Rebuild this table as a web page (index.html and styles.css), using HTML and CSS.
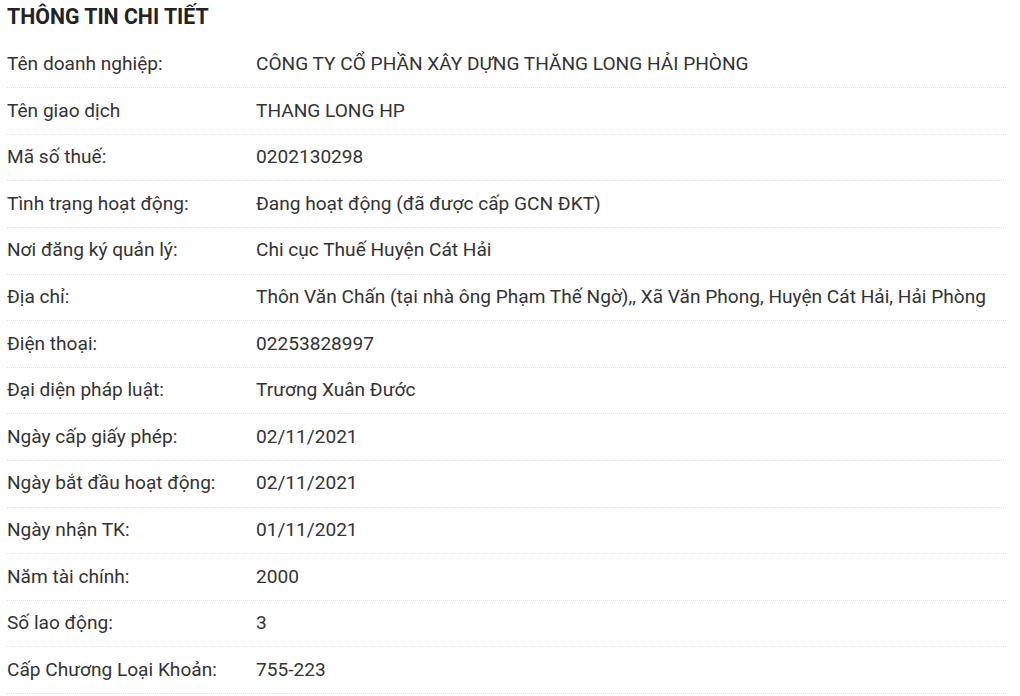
FILE: index.html
```html
<!DOCTYPE html>
<html lang="vi">
<head>
<meta charset="utf-8">
<link rel="stylesheet" href="styles.css">
</head>
<body>
<div class="detail">
  <h2 class="title">THÔNG TIN CHI TIẾT</h2>
  <div class="rows">
    <div class="row"><div class="label">Tên doanh nghiệp:</div><div class="value">CÔNG TY CỔ PHẦN XÂY DỰNG THĂNG LONG HẢI PHÒNG</div></div>
    <div class="row"><div class="label">Tên giao dịch</div><div class="value">THANG LONG HP</div></div>
    <div class="row"><div class="label">Mã số thuế:</div><div class="value">0202130298</div></div>
    <div class="row"><div class="label">Tình trạng hoạt động:</div><div class="value">Đang hoạt động (đã được cấp GCN ĐKT)</div></div>
    <div class="row"><div class="label">Nơi đăng ký quản lý:</div><div class="value">Chi cục Thuế Huyện Cát Hải</div></div>
    <div class="row"><div class="label">Địa chỉ:</div><div class="value">Thôn Văn Chấn (tại nhà ông Phạm Thế Ngờ),, Xã Văn Phong, Huyện Cát Hải, Hải Phòng</div></div>
    <div class="row"><div class="label">Điện thoại:</div><div class="value">02253828997</div></div>
    <div class="row"><div class="label">Đại diện pháp luật:</div><div class="value">Trương Xuân Đước</div></div>
    <div class="row"><div class="label">Ngày cấp giấy phép:</div><div class="value">02/11/2021</div></div>
    <div class="row"><div class="label">Ngày bắt đầu hoạt động:</div><div class="value">02/11/2021</div></div>
    <div class="row"><div class="label">Ngày nhận TK:</div><div class="value">01/11/2021</div></div>
    <div class="row"><div class="label">Năm tài chính:</div><div class="value">2000</div></div>
    <div class="row"><div class="label">Số lao động:</div><div class="value">3</div></div>
    <div class="row"><div class="label">Cấp Chương Loại Khoản:</div><div class="value">755-223</div></div>
  </div>
</div>
</body>
</html>
```
FILE: styles.css
```css
html, body {
  margin: 0;
  padding: 0;
  background: #fff;
}
body {
  font-family: Roboto, "Liberation Sans", Arial, sans-serif;
  color: #333;
}
.detail {
  width: 999px;
  padding-left: 7px;
}
.title {
  margin: 0;
  font-size: 21.3px;
  font-weight: bold;
  color: #222;
  line-height: 26px;
  padding-top: 4px;
  height: 41.7px;
  box-sizing: border-box;
}
.rows {
  display: flex;
  flex-direction: column;
}
.row {
  display: flex;
  font-size: 19.1px;
  line-height: 26px;
  padding: 9.3px 0 10.3px;
  border-bottom: 1px dotted #ddd;
}
.label {
  width: 249px;
  flex: none;
}
.value {
  flex: 1;
}
```
